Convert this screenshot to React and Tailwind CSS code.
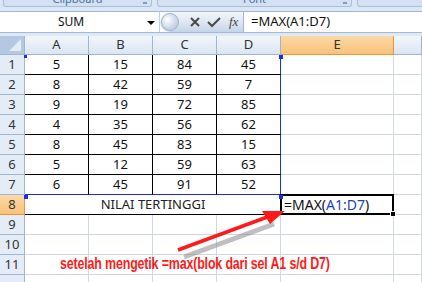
import React from 'react';

const data = [
  [5, 15, 84, 45],
  [8, 42, 59, 7],
  [9, 19, 72, 85],
  [4, 35, 56, 62],
  [8, 45, 83, 15],
  [5, 12, 59, 63],
  [6, 45, 91, 52],
];

const cols = ['A', 'B', 'C', 'D', 'E', ''];

const RowHead = ({ n, active }) => (
  <div
    className={
      active
        ? 'h-[20px] flex items-center justify-center bg-gradient-to-b from-[#fbd9a6] to-[#f7c27a] border-r border-b border-[#f29436] text-[13px] text-[#333]'
        : 'h-[20px] flex items-center justify-center bg-[#e4ecf7] border-r border-b border-[#9eb6ce] text-[13px] text-[#333]'
    }
  >
    {n}
  </div>
);

const Ribbon = () => (
  <div className="h-[11px] bg-[#dbe6f4] flex gap-[5px] px-[3px] overflow-hidden">
    {[
      ['Clipboard', 'w-[149px]'],
      ['Font', 'w-[195px]'],
      ['', 'w-[80px]'],
    ].map(([label, w], i) => (
      <div
        key={i}
        className={`${w} h-[7px] shrink-0 bg-[#d3e1f2] border border-t-0 border-[#a9bfdc] rounded-b-[3px] relative overflow-hidden`}
      >
        <div className="absolute inset-x-0 -top-[9px] text-center text-[11px] text-[#4d6fa3]">{label}</div>
        {label && <div className="absolute right-[4px] top-[2px] w-[4px] h-[2px] bg-[#7f9cc4]" />}
      </div>
    ))}
  </div>
);

const FormulaBar = () => (
  <div className="h-[22px] flex bg-white border-t border-b border-[#a5b8d3]">
    <div className="w-[160px] flex items-center relative border-r border-[#c3d0e2]">
      <span className="absolute left-[58px] text-[12px] text-[#111]">SUM</span>
      <span className="absolute left-[147px] top-[9px] w-0 h-0 border-l-[4px] border-r-[4px] border-t-[4px] border-l-transparent border-r-transparent border-t-black" />
    </div>
    <div className="w-[84px] flex items-center bg-gradient-to-b from-[#f3f6fb] via-[#dfe7f2] to-[#c5d4e8] rounded-l-[11px] border-r border-[#a5b8d3]">
      <div className="w-[18px] h-[18px] ml-[1px] rounded-full bg-[radial-gradient(circle_at_35%_35%,#ffffff,#d6e0ec_45%,#a9bcd5)] border border-[#9fb3cf]" />
      <svg width="12" height="12" viewBox="0 0 12 12" className="ml-[10px]">
        <path d="M2 2 L10 10 M10 2 L2 10" stroke="#4a4a4a" strokeWidth="2" />
      </svg>
      <svg width="14" height="12" viewBox="0 0 14 12" className="ml-[6px]">
        <path d="M1 6 L5 10 L13 2" stroke="#4a4a4a" strokeWidth="2" fill="none" />
      </svg>
      <span className="ml-[8px] text-[13px] italic text-[#444] font-['Liberation_Serif',serif]">fx</span>
    </div>
    <div className="flex-1 flex items-center pl-[7px] text-[13px] text-[#111]">=MAX(A1:D7)</div>
  </div>
);

export default function App() {
  const light = 'border-r border-b border-[#d0d7e5]';
  return (
    <div className="w-[422px] h-[282px] overflow-hidden bg-[#dfe8f5] relative font-['Noto_Sans','Liberation_Sans',sans-serif]">
      <Ribbon />
      <FormulaBar />
      <div className="h-[3px]" />
      <div className="grid grid-cols-[25px_64px_64px_64px_64px_113px_1fr] grid-rows-[19px] auto-rows-[20px] bg-white">
        <div className="bg-[#b4c8e3] border-r border-b border-[#9eb6ce] relative">
          <svg className="absolute right-[3px] bottom-[3px]" width="12" height="12">
            <path d="M12 0 L12 12 L0 12 Z" fill="#e3ebf6" />
          </svg>
        </div>
        {cols.map((c, i) => (
          <div
            key={i}
            className={
              c === 'E'
                ? 'flex items-center justify-center bg-gradient-to-b from-[#fbd9a6] to-[#f7c27a] border-r border-b border-[#f29436] text-[13px] text-[#333]'
                : 'flex items-center justify-center bg-gradient-to-b from-[#f2f6fb] to-[#dbe5f2] border-r border-b border-[#9eb6ce] text-[13px] text-[#333]'
            }
          >
            {c}
          </div>
        ))}
        {data.map((row, r) => (
          <React.Fragment key={r}>
            <RowHead n={r + 1} />
            {row.map((v, ci) => {
              const right = ci === 3 ? 'border-r-[#1a2cf0]' : 'border-r-black';
              const bottom = r === 6 ? 'border-b-[#1a2cf0]' : 'border-b-black';
              return (
                <div
                  key={ci}
                  className={`h-[20px] flex items-center justify-center border-r border-b ${right} ${bottom} text-[13px] text-[#111]`}
                >
                  {v}
                </div>
              );
            })}
            <div className={light} />
            <div className={light} />
          </React.Fragment>
        ))}
        <RowHead n={8} active />
        <div className="col-span-4 h-[20px] flex items-center justify-center border-b border-black text-[13px] text-[#222]">
          NILAI TERTINGGI
        </div>
        <div className="relative border-2 border-black -mt-[1px] -ml-[1px] h-[21px] flex items-center pl-[2px] text-[14px] text-[#111]">
          <span>=MAX(</span>
          <span className="text-[#2244b8]">A1:D7</span>
          <span>)</span>
          <div className="absolute -right-[4px] -bottom-[4px] w-[6px] h-[6px] bg-black border border-white" />
        </div>
        <div className={light} />
        {[9, 10, 11, ''].map((n, i) => (
          <React.Fragment key={i}>
            <RowHead n={n} />
            <div className={light} />
            <div className={light} />
            <div className={light} />
            <div className={light} />
            <div className={light} />
            <div className={light} />
          </React.Fragment>
        ))}
      </div>

      {/* range corner markers */}
      <div className="absolute left-[24px] top-[55px] w-[3px] h-[3px] bg-[#1a2cf0]" />
      <div className="absolute left-[279px] top-[55px] w-[4px] h-[4px] bg-[#1a2cf0]" />
      <div className="absolute left-[24px] top-[195px] w-[4px] h-[4px] bg-[#1a2cf0]" />
      <div className="absolute left-[279px] top-[195px] w-[4px] h-[4px] bg-[#1a2cf0]" />

      {/* annotation arrow */}
      <svg className="absolute left-0 top-0" width="422" height="282">
        <path d="M184 257 L274 224" stroke="#8a8a8a" strokeOpacity="0.55" strokeWidth="5" />
        <path d="M178 250 L270 216" stroke="#ff1a1a" strokeWidth="3.5" />
        <path d="M285 211 L262 211 L270 224 Z" fill="#ff1a1a" />
      </svg>
      <div className="absolute left-[60px] top-[251px] origin-left scale-x-[0.73] whitespace-nowrap text-[17px] font-bold text-[#ff1a1a] font-['Liberation_Sans',sans-serif] tracking-[-0.2px]">
        setelah mengetik =max(blok dari sel A1 s/d D7)
      </div>
    </div>
  );
}
